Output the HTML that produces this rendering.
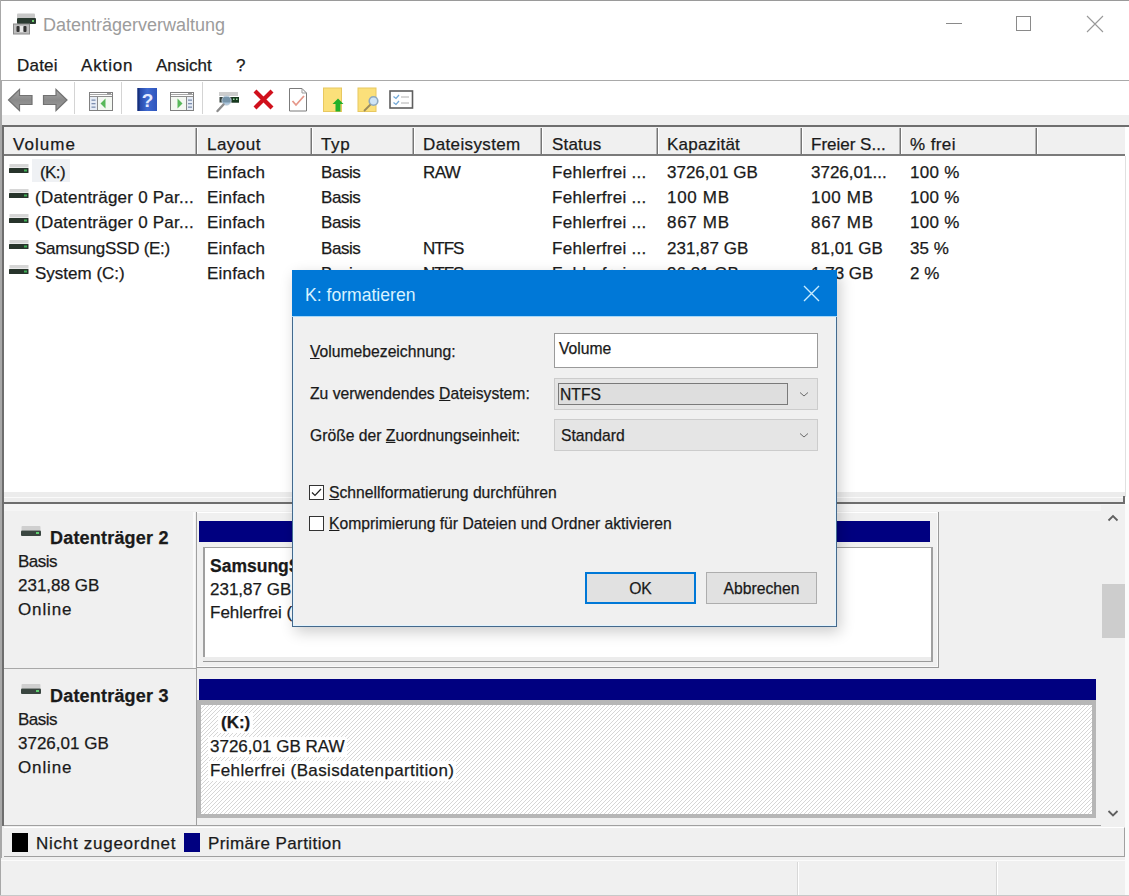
<!DOCTYPE html>
<html><head><meta charset="utf-8">
<style>
*{box-sizing:border-box;margin:0;padding:0}
html,body{width:1129px;height:896px;overflow:hidden}
body{position:relative;background:#f0f0f0;font-family:"Liberation Sans",sans-serif;font-size:17px;color:#1a1a1a}
.a{position:absolute}
.t{position:absolute;white-space:nowrap;line-height:20px;-webkit-text-stroke:0.25px currentColor}
</style></head><body>
<!-- window frame -->
<div class="a" style="left:0;top:0;width:1129px;height:81px;background:#fff"></div>
<div class="a" style="left:0;top:0;width:1129px;height:1px;background:#9a9a9a"></div>
<div class="a" style="left:0;top:0;width:1px;height:896px;background:#a8a8a8"></div>

<!-- title bar -->
<svg class="a" style="left:12px;top:12px" width="26" height="24" viewBox="0 0 26 24">
  <rect x="5" y="1.5" width="18" height="5" rx="1" fill="#c8c8c8"/>
  <rect x="5" y="6" width="19" height="6" rx="1" fill="#2a3a30"/>
  <rect x="20" y="8" width="2" height="2" fill="#6fcf6f"/>
  <rect x="1.5" y="12" width="16" height="10" fill="#bdbdbd" stroke="#8a8a8a" stroke-width="1"/>
  <rect x="4.5" y="14" width="3" height="6" rx="1" fill="#333"/>
  <rect x="11.5" y="14" width="3" height="6" rx="1" fill="#333"/>
  <rect x="8" y="14" width="3" height="6" fill="#e8e8e8"/>
</svg>
<div class="t" style="left:43px;top:15px;color:#9c9c9c;font-size:18px;-webkit-text-stroke:0">Datenträgerverwaltung</div>
<div class="a" style="left:946px;top:23px;width:16px;height:1px;background:#8a8a8a"></div>
<div class="a" style="left:1016px;top:16px;width:15px;height:15px;border:1px solid #8a8a8a"></div>
<svg class="a" style="left:1086px;top:15px" width="18" height="18" viewBox="0 0 18 18"><path d="M1 1L17 17M17 1L1 17" stroke="#999" stroke-width="1.1"/></svg>

<!-- menu -->
<div class="t" style="left:17px;top:56px;letter-spacing:0.22px">Datei</div>
<div class="t" style="left:81px;top:56px;letter-spacing:0.86px">Aktion</div>
<div class="t" style="left:156px;top:56px">Ansicht</div>
<div class="t" style="left:236px;top:56px">?</div>
<div class="a" style="left:0;top:80px;width:1129px;height:1px;background:#a9a9a9"></div>

<!-- toolbar -->
<div class="a" style="left:1px;top:81px;width:1128px;height:34px;background:#fff"></div>
<div class="a" style="left:1px;top:115px;width:1128px;height:10px;background:#efefef"></div>

<svg class="a" style="left:0;top:81px" width="430" height="34" viewBox="0 81 430 34">
  <!-- back arrow -->
  <defs><linearGradient id="ag" x1="0" x2="0" y1="0" y2="1"><stop offset="0" stop-color="#a9a9a9"/><stop offset="0.5" stop-color="#8a8a8a"/><stop offset="1" stop-color="#9c9c9c"/></linearGradient></defs><path d="M8.5 100 L19.5 89.5 L19.5 95.5 L32 95.5 L32 104.5 L19.5 104.5 L19.5 110.5 Z" fill="url(#ag)" stroke="#727272" stroke-width="1.2"/>
  <path d="M43.5 95.5 L56 95.5 L56 89.5 L67 100 L56 110.5 L56 104.5 L43.5 104.5 Z" fill="url(#ag)" stroke="#727272" stroke-width="1.2"/>
  <line x1="74.5" y1="82" x2="74.5" y2="114" stroke="#d4d4d4"/>
  <!-- show/hide console tree -->
  <rect x="89.5" y="92.5" width="23" height="18" fill="#fff" stroke="#808080"/>
  <line x1="90" y1="94.5" x2="112" y2="94.5" stroke="#a8a8a8"/>
  <line x1="90" y1="96.5" x2="112" y2="96.5" stroke="#909090"/>
  <rect x="107" y="93" width="4" height="1.5" fill="#9a9a9a"/>
  <line x1="97.5" y1="97" x2="97.5" y2="110" stroke="#8a8a8a"/>
  <rect x="90" y="97" width="7" height="13" fill="#e6ecf5"/>
  <rect x="91.5" y="99.5" width="4" height="1.3" fill="#7d8fb0"/>
  <rect x="91.5" y="103" width="4" height="1.3" fill="#7d8fb0"/>
  <rect x="91.5" y="106.5" width="4" height="1.3" fill="#7d8fb0"/>
  <rect x="98" y="97" width="14" height="13" fill="#f4f8f2"/>
  <path d="M105.5 98.5 L100.5 103.5 L105.5 108.5 Z" fill="#58b85a"/>
  <line x1="121.5" y1="82" x2="121.5" y2="114" stroke="#d4d4d4"/>
  <!-- help -->
  <defs><linearGradient id="hg" x1="0" x2="1" y1="0" y2="0"><stop offset="0" stop-color="#1f3f9e"/><stop offset="0.5" stop-color="#3f6ad0"/><stop offset="1" stop-color="#2f55bd"/></linearGradient></defs>
  <rect x="137.5" y="88" width="19.5" height="23" fill="url(#hg)"/>
  <rect x="137.5" y="88" width="2" height="23" fill="#17307a"/>
  <text x="147.5" y="106.5" font-family="Liberation Sans" font-weight="bold" font-size="19" fill="#e4eaff" text-anchor="middle">?</text>
  <!-- action pane -->
  <rect x="170.5" y="92.5" width="23" height="18" fill="#fff" stroke="#808080"/>
  <line x1="171" y1="94.5" x2="193" y2="94.5" stroke="#a8a8a8"/>
  <line x1="171" y1="96.5" x2="193" y2="96.5" stroke="#909090"/>
  <rect x="188" y="93" width="4" height="1.5" fill="#9a9a9a"/>
  <line x1="186.5" y1="97" x2="186.5" y2="110" stroke="#8a8a8a"/>
  <rect x="187" y="97" width="6" height="13" fill="#e6ecf5"/>
  <rect x="188" y="99.5" width="4" height="1.3" fill="#7d8fb0"/>
  <rect x="188" y="103" width="4" height="1.3" fill="#7d8fb0"/>
  <rect x="188" y="106.5" width="4" height="1.3" fill="#7d8fb0"/>
  <rect x="171" y="97" width="15" height="13" fill="#f4f8f2"/>
  <path d="M177.5 98.5 L182.5 103.5 L177.5 108.5 Z" fill="#58b85a"/>
  <line x1="202.5" y1="82" x2="202.5" y2="114" stroke="#d4d4d4"/>
  <!-- disk magnifier -->
  <rect x="219" y="92" width="19" height="4" fill="#cdcdcd"/>
  <rect x="219.5" y="97" width="19.5" height="5.5" fill="#34403a"/>
  <rect x="232" y="97" width="7" height="5.5" fill="#173a1f"/>
  <rect x="233" y="98.5" width="1.5" height="1.5" fill="#9fdca8"/>
  <rect x="236" y="98.5" width="1.5" height="1.5" fill="#9fdca8"/>
  <circle cx="226.5" cy="100.5" r="4.6" fill="#8eb0cf" fill-opacity="0.75" stroke="#b9cad6" stroke-width="1"/>
  <line x1="223.5" y1="104.5" x2="217.5" y2="111" stroke="#8c8c8c" stroke-width="2.4" stroke-linecap="round"/>
  <!-- red X -->
  <path d="M255 91 L272 108 M272 91 L255 108" stroke="#d0101c" stroke-width="4.2"/>
  <!-- document check -->
  <path d="M289.5 88.5 L302 88.5 L306.5 93 L306.5 111 L289.5 111 Z" fill="#fff" stroke="#7b7b7b"/>
  <path d="M302 88.5 L302 93 L306.5 93" fill="none" stroke="#9b9b9b"/>
  <path d="M292.5 101 L296 105 L304 96" fill="none" stroke="#e6988a" stroke-width="1.8"/>
  <!-- folder up -->
  <rect x="323.5" y="88" width="18" height="23.5" fill="#fbe07a" stroke="#e8c860" stroke-width="1"/>
  <path d="M338 98.5 L343.5 104 L340.5 104 L340.5 111.5 L335.5 111.5 L335.5 104 L332.5 104 Z" fill="#22b02a"/>
  <!-- folder find -->
  <rect x="358" y="88" width="18" height="23.5" fill="#fbe07a" stroke="#e8c860" stroke-width="1"/>
  <circle cx="373.5" cy="101" r="4.3" fill="#cfe4f6" stroke="#8ea9c0" stroke-width="1.6"/>
  <line x1="370.5" y1="104.5" x2="364" y2="111" stroke="#9a8a5a" stroke-width="1.8"/>
  <!-- properties -->
  <rect x="390" y="91" width="22.5" height="17" fill="#fff" stroke="#5e5e5e" stroke-width="1.6"/>
  <path d="M393.5 96.5 L396 98.5 L399 95" fill="none" stroke="#6fa6d6" stroke-width="1.2"/>
  <path d="M393.5 102.5 L396 104.5 L399 101" fill="none" stroke="#6fa6d6" stroke-width="1.2"/>
  <line x1="401" y1="97" x2="409" y2="97" stroke="#b0b0b0"/>
  <line x1="401" y1="103" x2="409" y2="103" stroke="#b0b0b0"/>
</svg>

<!-- list view -->
<div class="a" style="left:2px;top:125px;width:1127px;height:2px;background:#6e6e6e"></div>
<div class="a" style="left:2px;top:125px;width:2px;height:701px;background:#6e6e6e"></div><div class="a" style="left:0;top:81px;width:2px;height:777px;background:#a8a8a8"></div>
<div class="a" style="left:4px;top:127px;width:1125px;height:27px;background:#f0f0f0"></div>
<div class="a" style="left:4px;top:154px;width:1125px;height:2px;background:#7a7a7a"></div>
<div class="a" style="left:4px;top:156px;width:1125px;height:336px;background:#fff"></div>
<div class="a" style="left:195px;top:128px;width:1px;height:26px;background:#b4b4b4"></div><div class="a" style="left:196px;top:128px;width:1px;height:26px;background:#767676"></div><div class="a" style="left:197px;top:128px;width:1px;height:26px;background:#fff"></div>
<div class="a" style="left:310px;top:128px;width:1px;height:26px;background:#b4b4b4"></div><div class="a" style="left:311px;top:128px;width:1px;height:26px;background:#767676"></div><div class="a" style="left:312px;top:128px;width:1px;height:26px;background:#fff"></div>
<div class="a" style="left:412px;top:128px;width:1px;height:26px;background:#b4b4b4"></div><div class="a" style="left:413px;top:128px;width:1px;height:26px;background:#767676"></div><div class="a" style="left:414px;top:128px;width:1px;height:26px;background:#fff"></div>
<div class="a" style="left:540px;top:128px;width:1px;height:26px;background:#b4b4b4"></div><div class="a" style="left:541px;top:128px;width:1px;height:26px;background:#767676"></div><div class="a" style="left:542px;top:128px;width:1px;height:26px;background:#fff"></div>
<div class="a" style="left:656px;top:128px;width:1px;height:26px;background:#b4b4b4"></div><div class="a" style="left:657px;top:128px;width:1px;height:26px;background:#767676"></div><div class="a" style="left:658px;top:128px;width:1px;height:26px;background:#fff"></div>
<div class="a" style="left:800px;top:128px;width:1px;height:26px;background:#b4b4b4"></div><div class="a" style="left:801px;top:128px;width:1px;height:26px;background:#767676"></div><div class="a" style="left:802px;top:128px;width:1px;height:26px;background:#fff"></div>
<div class="a" style="left:899px;top:128px;width:1px;height:26px;background:#b4b4b4"></div><div class="a" style="left:900px;top:128px;width:1px;height:26px;background:#767676"></div><div class="a" style="left:901px;top:128px;width:1px;height:26px;background:#fff"></div>
<div class="a" style="left:1035px;top:128px;width:1px;height:26px;background:#b4b4b4"></div><div class="a" style="left:1036px;top:128px;width:1px;height:26px;background:#767676"></div><div class="a" style="left:1037px;top:128px;width:1px;height:26px;background:#fff"></div>
<div class="t" style="left:13px;top:135px;letter-spacing:1.04px">Volume</div>
<div class="t" style="left:207px;top:135px;letter-spacing:0.48px">Layout</div>
<div class="t" style="left:321px;top:135px;letter-spacing:0.65px">Typ</div>
<div class="t" style="left:423px;top:135px;letter-spacing:0.37px">Dateisystem</div>
<div class="t" style="left:552px;top:135px;letter-spacing:0.2px">Status</div>
<div class="t" style="left:667px;top:135px;letter-spacing:0.24px">Kapazität</div>
<div class="t" style="left:811px;top:135px">Freier S...</div>
<div class="t" style="left:910px;top:135px;letter-spacing:0.4px">% frei</div>

<div class="a" style="left:32px;top:159px;width:38px;height:23px;background:#eff1f4"></div>
<svg class="a" style="left:9px;top:164px" width="20" height="11" viewBox="0 0 20 11"><rect x="0.5" y="0" width="19" height="3.5" fill="#d6d6d6"/><rect x="0" y="4" width="19.5" height="5" rx="0.5" fill="#27342b"/><rect x="15" y="5.5" width="3" height="2" fill="#3fae55"/></svg>
<div class="t" style="left:40px;top:163px;letter-spacing:-0.6px">(K:)</div>
<div class="t" style="left:207px;top:163px;letter-spacing:0.2px">Einfach</div>
<div class="t" style="left:321px;top:163px;letter-spacing:-0.45px">Basis</div>
<div class="t" style="left:423px;top:163px;letter-spacing:-0.65px">RAW</div>
<div class="t" style="left:552px;top:163px;letter-spacing:0.28px">Fehlerfrei ...</div>
<div class="t" style="left:667px;top:163px">3726,01 GB</div>
<div class="t" style="left:811px;top:163px">3726,01...</div>
<div class="t" style="left:910px;top:163px;letter-spacing:0.3px">100 %</div>
<svg class="a" style="left:9px;top:189px" width="20" height="11" viewBox="0 0 20 11"><rect x="0.5" y="0" width="19" height="3.5" fill="#d6d6d6"/><rect x="0" y="4" width="19.5" height="5" rx="0.5" fill="#27342b"/><rect x="15" y="5.5" width="3" height="2" fill="#3fae55"/></svg>
<div class="t" style="left:35px;top:188px;letter-spacing:0.23px">(Datenträger 0 Par...</div>
<div class="t" style="left:207px;top:188px;letter-spacing:0.2px">Einfach</div>
<div class="t" style="left:321px;top:188px;letter-spacing:-0.45px">Basis</div>
<div class="t" style="left:552px;top:188px;letter-spacing:0.28px">Fehlerfrei ...</div>
<div class="t" style="left:667px;top:188px;letter-spacing:0.68px">100 MB</div>
<div class="t" style="left:811px;top:188px;letter-spacing:0.68px">100 MB</div>
<div class="t" style="left:910px;top:188px;letter-spacing:0.3px">100 %</div>
<svg class="a" style="left:9px;top:214px" width="20" height="11" viewBox="0 0 20 11"><rect x="0.5" y="0" width="19" height="3.5" fill="#d6d6d6"/><rect x="0" y="4" width="19.5" height="5" rx="0.5" fill="#27342b"/><rect x="15" y="5.5" width="3" height="2" fill="#3fae55"/></svg>
<div class="t" style="left:35px;top:213px;letter-spacing:0.23px">(Datenträger 0 Par...</div>
<div class="t" style="left:207px;top:213px;letter-spacing:0.2px">Einfach</div>
<div class="t" style="left:321px;top:213px;letter-spacing:-0.45px">Basis</div>
<div class="t" style="left:552px;top:213px;letter-spacing:0.28px">Fehlerfrei ...</div>
<div class="t" style="left:667px;top:213px;letter-spacing:0.68px">867 MB</div>
<div class="t" style="left:811px;top:213px;letter-spacing:0.68px">867 MB</div>
<div class="t" style="left:910px;top:213px;letter-spacing:0.3px">100 %</div>
<svg class="a" style="left:9px;top:240px" width="20" height="11" viewBox="0 0 20 11"><rect x="0.5" y="0" width="19" height="3.5" fill="#d6d6d6"/><rect x="0" y="4" width="19.5" height="5" rx="0.5" fill="#27342b"/><rect x="15" y="5.5" width="3" height="2" fill="#3fae55"/></svg>
<div class="t" style="left:35px;top:239px;letter-spacing:-0.26px">SamsungSSD (E:)</div>
<div class="t" style="left:207px;top:239px;letter-spacing:0.2px">Einfach</div>
<div class="t" style="left:321px;top:239px;letter-spacing:-0.45px">Basis</div>
<div class="t" style="left:423px;top:239px;letter-spacing:-1.0px">NTFS</div>
<div class="t" style="left:552px;top:239px;letter-spacing:0.28px">Fehlerfrei ...</div>
<div class="t" style="left:667px;top:239px">231,87 GB</div>
<div class="t" style="left:811px;top:239px">81,01 GB</div>
<div class="t" style="left:910px;top:239px">35 %</div>
<svg class="a" style="left:9px;top:265px" width="20" height="11" viewBox="0 0 20 11"><rect x="0.5" y="0" width="19" height="3.5" fill="#d6d6d6"/><rect x="0" y="4" width="19.5" height="5" rx="0.5" fill="#27342b"/><rect x="15" y="5.5" width="3" height="2" fill="#3fae55"/></svg>
<div class="t" style="left:35px;top:264px">System (C:)</div>
<div class="t" style="left:207px;top:264px;letter-spacing:0.2px">Einfach</div>
<div class="t" style="left:321px;top:264px;letter-spacing:-0.45px">Basis</div>
<div class="t" style="left:423px;top:264px;letter-spacing:-1.0px">NTFS</div>
<div class="t" style="left:552px;top:264px;letter-spacing:0.28px">Fehlerfrei ...</div>
<div class="t" style="left:667px;top:264px">96,31 GB</div>
<div class="t" style="left:811px;top:264px">1,73 GB</div>
<div class="t" style="left:910px;top:264px">2 %</div>


<!-- splitter -->
<div class="a" style="left:4px;top:492px;width:1125px;height:11px;background:#ececec"></div>
<div class="a" style="left:4px;top:497px;width:1125px;height:1px;background:#fafafa"></div>
<div class="a" style="left:2px;top:502px;width:1123px;height:2px;background:#6e6e6e"></div><div class="a" style="left:4px;top:504px;width:1119px;height:1px;background:#a8a8a8"></div>
<div class="a" style="left:1123px;top:496px;width:2px;height:8px;background:#6e6e6e"></div>
<div class="a" style="left:1125px;top:127px;width:4px;height:377px;background:#fff"></div>
<div class="a" style="left:1125px;top:156px;width:1px;height:341px;background:#e0e0e0"></div>


<!-- graph area -->
<div class="a" style="left:4px;top:504px;width:1121px;height:7px;background:#f5f5f5"></div>
<!-- disk 2 info -->
<div class="a" style="left:4px;top:512px;width:191px;height:156px;background:#f0f0f0;border-right:2px solid #fafafa"></div>
<div class="a" style="left:196px;top:512px;width:1px;height:314px;background:#a0a0a0"></div>
<div class="a" style="left:4px;top:668px;width:193px;height:1px;background:#a8a8a8"></div>
<svg class="a" style="left:21px;top:526px" width="20" height="12" viewBox="0 0 20 12"><rect x="0.5" y="0" width="19" height="4.5" rx="1" fill="#cfcfcf"/><rect x="0" y="4.5" width="20" height="5.5" rx="1" fill="#3a4640"/><rect x="15" y="6" width="3" height="2" fill="#5fcf6f"/></svg>
<div class="t" style="left:50px;top:528px;font-weight:bold;font-size:18px;letter-spacing:0.2px">Datenträger 2</div>
<div class="t" style="left:18px;top:552px;letter-spacing:-0.5px">Basis</div>
<div class="t" style="left:18px;top:576px">231,88 GB</div>
<div class="t" style="left:18px;top:600px;letter-spacing:0.88px">Online</div>
<!-- disk 2 partition -->
<div class="a" style="left:197px;top:512px;width:742px;height:156px;border-right:1px solid #9a9a9a;border-bottom:1px solid #9a9a9a;background:#f0f0f0;box-shadow:inset -1px -1px 0 #fafafa"></div>
<div class="a" style="left:197px;top:512px;width:740px;height:1px;background:#fff"></div>
<div class="a" style="left:199px;top:521px;width:731px;height:21px;background:#000080"></div>
<div class="a" style="left:203px;top:547px;width:728px;height:114px;background:#ececec"></div>
<div class="a" style="left:203px;top:547px;width:728px;height:110px;background:#fff;border-top:1px solid #a0a0a0;border-left:2px solid #a0a0a0"></div>
<div class="a" style="left:203px;top:661px;width:730px;height:1px;background:#9a9a9a"></div>
<div class="a" style="left:931px;top:547px;width:2px;height:115px;background:#a0a0a0"></div>
<div class="t" style="left:210px;top:556px;font-weight:bold;font-size:17.5px">SamsungSSD (E:)</div>
<div class="t" style="left:210px;top:580px">231,87 GB NTFS</div>
<div class="t" style="left:210px;top:603px">Fehlerfrei (Startpartition, Seitendatei)</div>
<!-- disk 3 info -->
<svg class="a" style="left:21px;top:684px" width="20" height="12" viewBox="0 0 20 12"><rect x="0.5" y="0" width="19" height="4.5" rx="1" fill="#cfcfcf"/><rect x="0" y="4.5" width="20" height="5.5" rx="1" fill="#3a4640"/><rect x="15" y="6" width="3" height="2" fill="#5fcf6f"/></svg>
<div class="t" style="left:50px;top:686px;font-weight:bold;font-size:18px;letter-spacing:0.2px">Datenträger 3</div>
<div class="t" style="left:18px;top:710px;letter-spacing:-0.5px">Basis</div>
<div class="t" style="left:18px;top:734px">3726,01 GB</div>
<div class="t" style="left:18px;top:758px;letter-spacing:0.88px">Online</div>
<!-- disk 3 partition -->
<div class="a" style="left:199px;top:679px;width:897px;height:21px;background:#000080"></div>
<div class="a" style="left:197px;top:700px;width:899px;height:118px;border:4px solid #b6b6b6;border-top-width:5px;background:#fff;overflow:hidden"><svg width="900" height="120" style="display:block"><defs><pattern id="hp" width="4" height="4" patternUnits="userSpaceOnUse"><rect x="3" y="0" width="1" height="1" fill="#d6d6d6"/><rect x="2" y="1" width="1" height="1" fill="#d6d6d6"/><rect x="1" y="2" width="1" height="1" fill="#d6d6d6"/><rect x="0" y="3" width="1" height="1" fill="#d6d6d6"/></pattern></defs><rect width="900" height="120" fill="url(#hp)"/></svg></div>
<div class="t" style="left:218px;top:713px;font-weight:bold;background:#fff;padding:0 3px">(K:)</div>
<div class="t" style="left:208px;top:737px;background:#fff;padding:0 2px">3726,01 GB RAW</div>
<div class="t" style="left:208px;top:761px;background:#fff;padding:0 2px;letter-spacing:0.37px">Fehlerfrei (Basisdatenpartition)</div>
<div class="a" style="left:4px;top:825px;width:1097px;height:1px;background:#a0a0a0"></div>
<!-- scrollbar -->
<div class="a" style="left:1101px;top:505px;width:24px;height:320px;background:#f0f0f0"></div>
<div class="a" style="left:1102px;top:584px;width:23px;height:54px;background:#cdcdcd"></div>
<svg class="a" style="left:1106px;top:513px" width="14" height="10" viewBox="0 0 14 10"><path d="M2.5 7.5 L7 3 L11.5 7.5" fill="none" stroke="#606060" stroke-width="1.8"/></svg>
<svg class="a" style="left:1106px;top:808px" width="14" height="10" viewBox="0 0 14 10"><path d="M2.5 3 L7 7.5 L11.5 3" fill="none" stroke="#606060" stroke-width="1.8"/></svg>
<div class="a" style="left:1125px;top:504px;width:4px;height:392px;background:#fbfbfb"></div>


<div class="a" style="left:4px;top:827px;width:1121px;height:30px;background:#f0f0f0;border-top:1px solid #fff;border-bottom:1px solid #a0a0a0;border-right:1px solid #a0a0a0"></div>
<div class="a" style="left:12px;top:833px;width:16px;height:19px;background:#000"></div>
<div class="t" style="left:36px;top:834px;letter-spacing:0.73px">Nicht zugeordnet</div>
<div class="a" style="left:184px;top:833px;width:16px;height:19px;background:#000080"></div>
<div class="t" style="left:208px;top:834px;letter-spacing:0.41px">Primäre Partition</div>


<div class="a" style="left:1px;top:860px;width:1128px;height:1px;background:#fbfbfb"></div>
<div class="a" style="left:797px;top:862px;width:1px;height:34px;background:#d8d8d8"></div>
<div class="a" style="left:798px;top:862px;width:1px;height:34px;background:#fff"></div>
<div class="a" style="left:996px;top:862px;width:1px;height:34px;background:#d8d8d8"></div><div class="a" style="left:997px;top:862px;width:1px;height:34px;background:#fff"></div>
<div class="a" style="left:0;top:895px;width:1129px;height:1px;background:#c8c8c8"></div>


<!-- dialog -->
<div class="a" style="left:292px;top:270px;width:545px;height:357px;box-shadow:3px 5px 14px rgba(0,0,0,0.20)"></div>
<div class="a" style="left:292px;top:270px;width:545px;height:357px;background:#f0f0f0;border:1px solid #45698c;box-shadow:inset 0 0 0 1px #e2f4ff"></div>
<div class="a" style="left:292px;top:270px;width:545px;height:46px;background:#0078d7"></div>
<div class="a" style="left:292px;top:316px;width:545px;height:1px;background:#a8d8f8"></div>
<div class="t" style="left:305px;top:285px;color:#d8f2ff;font-size:17.6px;-webkit-text-stroke:0">K: formatieren</div>
<svg class="a" style="left:803px;top:285px" width="17" height="17" viewBox="0 0 17 17"><path d="M1 1L16 16M16 1L1 16" stroke="#c8ecff" stroke-width="1.4"/></svg>
<div class="t" style="left:310px;top:342px;font-size:15.7px"><u>V</u>olumebezeichnung:</div>
<div class="t" style="left:310px;top:384px;font-size:15.7px">Zu verwendendes <u>D</u>ateisystem:</div>
<div class="t" style="left:310px;top:426px;font-size:15.7px">Größe der <u>Z</u>uordnungseinheit:</div>
<div class="a" style="left:554px;top:333px;width:264px;height:35px;background:#fff;border:1px solid #9a9a9a"></div>
<div class="t" style="left:559px;top:339px;font-size:15.7px">Volume</div>
<div class="a" style="left:554px;top:378px;width:264px;height:32px;background:#e5e5e5;border:1px solid #cccccc"></div>
<div class="a" style="left:558px;top:383px;width:230px;height:22px;background:#dedede;border:1px solid #7a7a7a"></div>
<div class="t" style="left:560px;top:385px;font-size:15.7px">NTFS</div>
<svg class="a" style="left:798px;top:390px" width="12" height="8" viewBox="0 0 12 8"><path d="M2 2.5 L6 6 L10 2.5" fill="none" stroke="#6a6a6a" stroke-width="1"/></svg>
<div class="a" style="left:554px;top:419px;width:264px;height:32px;background:#e5e5e5;border:1px solid #cccccc"></div>
<div class="t" style="left:561px;top:426px;font-size:15.7px">Standard</div>
<svg class="a" style="left:798px;top:431px" width="12" height="8" viewBox="0 0 12 8"><path d="M2 2.5 L6 6 L10 2.5" fill="none" stroke="#6a6a6a" stroke-width="1"/></svg>
<div class="a" style="left:309px;top:485px;width:15px;height:15px;background:#fff;border:1px solid #333"></div>
<svg class="a" style="left:309px;top:485px" width="15" height="15" viewBox="0 0 15 15"><path d="M3 7.5 L6 10.5 L12 4" fill="none" stroke="#222" stroke-width="1.2"/></svg>
<div class="t" style="left:329px;top:483px;font-size:15.7px"><u>S</u>chnellformatierung durchführen</div>
<div class="a" style="left:309px;top:516px;width:15px;height:15px;background:#fff;border:1px solid #333"></div>
<div class="t" style="left:329px;top:514px;font-size:15.7px"><u>K</u>omprimierung für Dateien und Ordner aktivieren</div>
<div class="a" style="left:585px;top:572px;width:111px;height:32px;background:#e1e1e1;border:2px solid #0078d7"></div>
<div class="t" style="left:585px;top:579px;width:111px;text-align:center;font-size:15.7px">OK</div>
<div class="a" style="left:706px;top:572px;width:111px;height:32px;background:#e1e1e1;border:1px solid #adadad"></div>
<div class="t" style="left:706px;top:579px;width:111px;text-align:center;font-size:15.7px">Abbrechen</div>

</body></html>
